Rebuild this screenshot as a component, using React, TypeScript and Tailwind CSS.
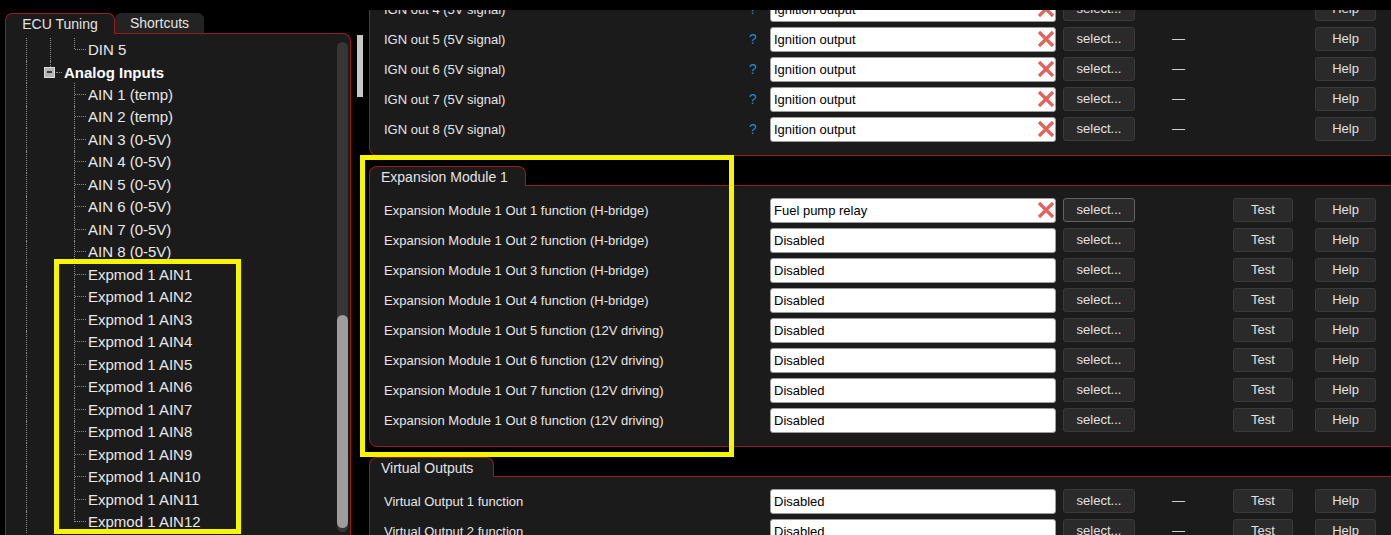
import React from 'react'

const RED = 'border-[#9b1b1b]'
const DOT = 'border-dotted border-[#8c8c8c]'

type Seg = 'none' | 'line' | 'tee' | 'elbow'

function Guide({ seg }: { seg: Seg }) {
  return (
    <div className="flex h-full w-[24px] shrink-0">
      <div className="flex h-full w-[13px] shrink-0 flex-col">
        {seg !== 'none' && <div className={`${seg === 'elbow' ? 'h-1/2' : 'h-full'} border-r ${DOT}`} />}
      </div>
      <div className="flex h-full flex-1 items-center">
        {(seg === 'tee' || seg === 'elbow') && <div className={`w-full border-t ${DOT}`} />}
      </div>
    </div>
  )
}

function TreeRow({ segs, label }: { segs: Seg[]; label: string }) {
  return (
    <div className="flex h-[22.5px]">
      {segs.map((s, i) => (
        <Guide key={i} seg={s} />
      ))}
      <span className="ml-[2px] self-center text-[15px] leading-none text-[#e8e8e8]">{label}</span>
    </div>
  )
}

const AIN = [
  'AIN 1 (temp)',
  'AIN 2 (temp)',
  'AIN 3 (0-5V)',
  'AIN 4 (0-5V)',
  'AIN 5 (0-5V)',
  'AIN 6 (0-5V)',
  'AIN 7 (0-5V)',
  'AIN 8 (0-5V)',
  ...Array.from({ length: 12 }, (_, i) => `Expmod 1 AIN${i + 1}`),
]

function Tree() {
  return (
    <div className="min-w-0 flex-1 pl-[8px] pt-[4px]">
      <TreeRow segs={['line', 'line', 'elbow']} label="DIN 5" />
      <div className="flex h-[22.5px]">
        <Guide seg="line" />
        <div className="flex h-full w-[24px] shrink-0 flex-col">
          <div className={`h-[6px] w-[13px] border-r ${DOT}`} />
          <div className="flex h-[11px] items-center">
            <div className="ml-[6px] flex h-[11px] w-[11px] shrink-0 items-center justify-center border border-[#dcdcdc] bg-[#b4b4b4]">
              <div className="h-[2px] w-[5px] bg-[#3a3a3a]" />
            </div>
            <div className={`ml-[1px] flex-1 border-t ${DOT}`} />
          </div>
        </div>
        <span className="ml-[2px] self-center pt-[1px] text-[15px] font-bold leading-none text-white">Analog Inputs</span>
      </div>
      {AIN.map((a, i) => (
        <TreeRow key={a} segs={['line', 'none', i === AIN.length - 1 ? 'elbow' : 'tee']} label={a} />
      ))}
    </div>
  )
}

function Btn({ label, w, focus }: { label: string; w: string; focus?: boolean }) {
  return (
    <div
      className={`flex h-[24px] ${w} shrink-0 items-center justify-center rounded-[3px] border ${
        focus ? 'border-[#626262]' : 'border-[#3a3a3a]'
      } bg-[#2a2a2a] text-[13px] text-[#e2e2e2]`}
    >
      {label}
    </div>
  )
}

function ClearX() {
  return (
    <svg width="18" height="18" viewBox="0 0 18 18" className="shrink-0">
      <path d="M2 2 L16 16 M16 2 L2 16" stroke="#e5615a" strokeWidth="3.2" />
    </svg>
  )
}

type Row = { label: string; q?: boolean; value: string; clear?: boolean; dash?: boolean; test?: boolean; focus?: boolean }

function ConfigRow({ r }: { r: Row }) {
  return (
    <div className="flex h-[30px] items-center">
      <div className="w-[361px] shrink-0 pt-[2px] text-[13px] text-[#e6e6e6]">{r.label}</div>
      <div className="w-[25px] shrink-0 pl-[4px] text-[14px] text-[#1f8fc9]">{r.q ? '?' : ''}</div>
      <div className="flex h-[25px] w-[286px] shrink-0 items-center justify-between rounded-[3px] border border-[#9c9c9c] bg-white pl-[3px] text-[13px] text-black">
        <span className="pt-[2px]">{r.value}</span>
        {r.clear && <ClearX />}
      </div>
      <div className="ml-[7px]">
        <Btn label="select..." w="w-[72px]" focus={r.focus} />
      </div>
      <div className="w-[98px] shrink-0 pl-[37px] text-[13px] text-[#cfcfcf]">{r.dash ? '—' : ''}</div>
      {r.test ? <Btn label="Test" w="w-[60px]" /> : <div className="w-[60px] shrink-0" />}
      <div className="ml-[22px]">
        <Btn label="Help" w="w-[61px]" />
      </div>
    </div>
  )
}

const IGN: Row[] = [4, 5, 6, 7, 8].map((n) => ({
  label: `IGN out ${n} (5V signal)`,
  q: true,
  value: 'Ignition output',
  clear: true,
  dash: true,
}))

const EXP: Row[] = [1, 2, 3, 4, 5, 6, 7, 8].map((n) => ({
  label: `Expansion Module 1 Out ${n} function (${n <= 4 ? 'H-bridge' : '12V driving'})`,
  value: n === 1 ? 'Fuel pump relay' : 'Disabled',
  clear: n === 1,
  focus: n === 1,
  test: true,
}))

const VIRT: Row[] = [1, 2].map((n) => ({
  label: `Virtual Output ${n} function`,
  value: 'Disabled',
  dash: true,
  test: true,
}))

function Section({ title, tabW, rows }: { title: string; tabW: string; rows: Row[] }) {
  return (
    <div className="mt-[10px]">
      <div className="flex h-[20px]">
        <div
          className={`relative z-10 flex h-[20px] ${tabW} items-center rounded-t-[8px] border border-b-0 ${RED} bg-[#1b1b1b] pl-[11px] pt-[1px] text-[14px] text-[#e4e4e4]`}
        >
          {title}
        </div>
      </div>
      <div className={`-mt-px rounded-bl-[8px] border ${RED} bg-[#1b1b1b] pb-[11px] pl-[14px] pt-[9px]`}>
        {rows.map((r) => (
          <ConfigRow key={r.label} r={r} />
        ))}
      </div>
    </div>
  )
}

export default function App() {
  return (
    <div className="relative flex h-[535px] w-[1391px] overflow-hidden bg-black font-['Liberation_Sans',Arial,sans-serif]">
      {/* left: tree panel */}
      <div className="ml-[5px] flex w-[346px] shrink-0 flex-col pt-[13px]">
        <div className="flex h-[20px] items-start">
          <div
            className={`relative z-10 flex h-[21px] w-[110px] shrink-0 items-center justify-center rounded-t-[7px] border border-b-0 ${RED} bg-[#1b1b1b] text-[14px] text-[#e4e4e4]`}
          >
            ECU Tuning
          </div>
          <div className="flex h-[20px] w-[89px] shrink-0 items-center justify-center rounded-t-[6px] bg-[#232323] text-[14px] text-[#e4e4e4]">
            Shortcuts
          </div>
        </div>
        <div className={`flex min-h-0 flex-1 rounded-tr-[8px] border border-b-0 ${RED} bg-[#1b1b1b]`}>
          <Tree />
          <div className="mr-[2px] mt-[8px] h-[490px] w-[11px] shrink-0 rounded-full bg-[#363636]">
            <div className="mt-[273px] h-[213px] w-full rounded-full bg-[#9d9d9d]" />
          </div>
        </div>
      </div>

      {/* right pane scrollbar */}
      <div className="ml-[6px] w-[6px] shrink-0">
        <div className="mt-[35px] h-[62px] w-full bg-[#c6c6c6]" />
      </div>

      {/* right: settings list */}
      <div className="ml-[6px] flex min-w-0 flex-1 flex-col">
        <div className="h-[10px] shrink-0" />
        <div className="min-h-0 flex-1 overflow-hidden">
          <div className="w-[1040px]">
            <div className={`-mt-[16px] rounded-bl-[8px] border border-t-0 ${RED} bg-[#1b1b1b] pb-[11px] pl-[14px]`}>
              {IGN.map((r) => (
                <ConfigRow key={r.label} r={r} />
              ))}
            </div>
            <Section title="Expansion Module 1" tabW="w-[157px]" rows={EXP} />
            <Section title="Virtual Outputs" tabW="w-[125px]" rows={VIRT} />
          </div>
        </div>
      </div>

      {/* highlight annotations */}
      <div className="pointer-events-none absolute left-[54px] top-[259px] h-[275px] w-[187px] border-[5px] border-[#f6f600]" />
      <div className="pointer-events-none absolute left-[360px] top-[155px] h-[302px] w-[374px] border-[5px] border-[#f6f600]" />
    </div>
  )
}
